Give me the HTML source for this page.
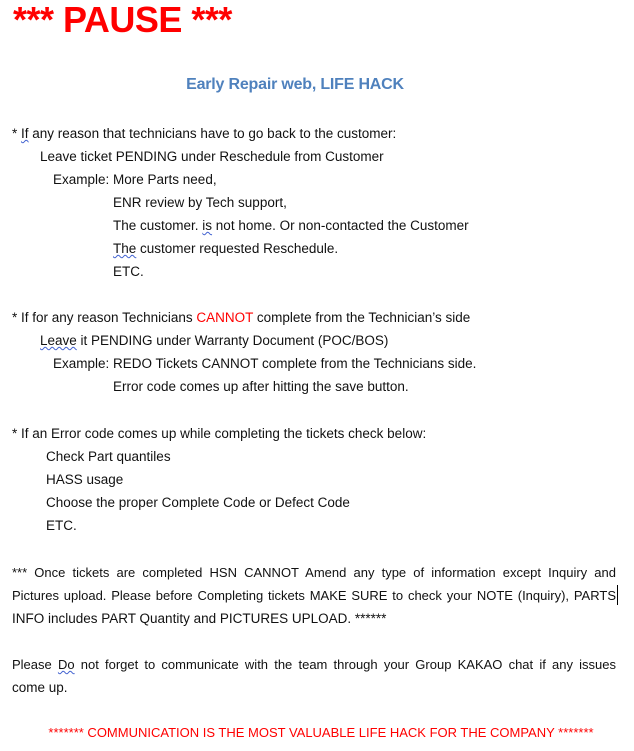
<!DOCTYPE html>
<html><head><meta charset="utf-8"><style>
body{margin:0;width:634px;height:751px;background:#fff;position:relative;overflow:hidden;font-family:"Liberation Sans","Noto Sans CJK KR",sans-serif;font-size:13.5px;color:#111}
.l{position:absolute;white-space:nowrap;line-height:18px}
.j{position:absolute;left:12px;width:604px;line-height:18px;text-align:justify;text-align-last:justify;white-space:nowrap}
.r{color:#f00}
.u{text-decoration:underline wavy #4060d0;text-decoration-thickness:1px}
</style></head><body>
<div class="l" style="left:13px;top:0px;font-size:36px;line-height:40px;font-weight:bold;color:#f00;letter-spacing:-0.5px">*** PAUSE ***</div>
<div class="l" style="left:0;width:590px;text-align:center;top:76px;font-size:16px;font-weight:bold;color:#4f81bd;letter-spacing:-0.2px">Early Repair web, LIFE HACK</div>
<div class="l" style="left:12px;top:125px">* <span class="u">If</span> any reason that technicians have to go back to the customer:</div>
<div class="l" style="left:40px;top:148px">Leave ticket PENDING under Reschedule from Customer</div>
<div class="l" style="left:53px;top:171px">Example: More Parts need,</div>
<div class="l" style="left:113px;top:194px">ENR review by Tech support,</div>
<div class="l" style="left:113px;top:217px">The customer. <span class="u">is</span> not home. Or non-contacted the Customer</div>
<div class="l" style="left:113px;top:240px"><span class="u">The</span> customer requested Reschedule.</div>
<div class="l" style="left:113px;top:263px">ETC.</div>
<div class="l" style="left:12px;top:309px">* If for any reason Technicians <span class="r">CANNOT</span> complete from the Technician’s side</div>
<div class="l" style="left:40px;top:332px"><span class="u">Leave</span> it PENDING under Warranty Document (POC/BOS)</div>
<div class="l" style="left:53px;top:355px">Example: REDO Tickets CANNOT complete from the Technicians side.</div>
<div class="l" style="left:113px;top:378px">Error code comes up after hitting the save button.</div>
<div class="l" style="left:12px;top:425px">* If an Error code comes up while completing the tickets check below:</div>
<div class="l" style="left:46px;top:448px">Check Part quantiles</div>
<div class="l" style="left:46px;top:471px">HASS usage</div>
<div class="l" style="left:46px;top:494px">Choose the proper Complete Code or Defect Code</div>
<div class="l" style="left:46px;top:517px">ETC.</div>
<div class="j" style="top:564px;font-size:13px">*** Once tickets are completed HSN CANNOT Amend any type of information except Inquiry and</div>
<div class="j" style="top:587px;font-size:13px">Pictures upload. Please before Completing tickets MAKE SURE to check your NOTE (Inquiry), PARTS</div>
<div style="position:absolute;left:617px;top:585px;width:1px;height:20px;background:#000"></div>
<div class="l" style="left:12px;top:610px">INFO includes PART Quantity and PICTURES UPLOAD. ******</div>
<div class="j" style="top:656px;font-size:13px">Please <span class="u">Do</span> not forget to communicate with the team through your Group KAKAO chat if any issues</div>
<div class="l" style="left:12px;top:679px">come up.</div>
<div class="l r" style="left:0;width:642px;text-align:center;top:724px;font-size:13px">******* COMMUNICATION IS THE MOST VALUABLE LIFE HACK FOR THE COMPANY *******</div>
</body></html>
